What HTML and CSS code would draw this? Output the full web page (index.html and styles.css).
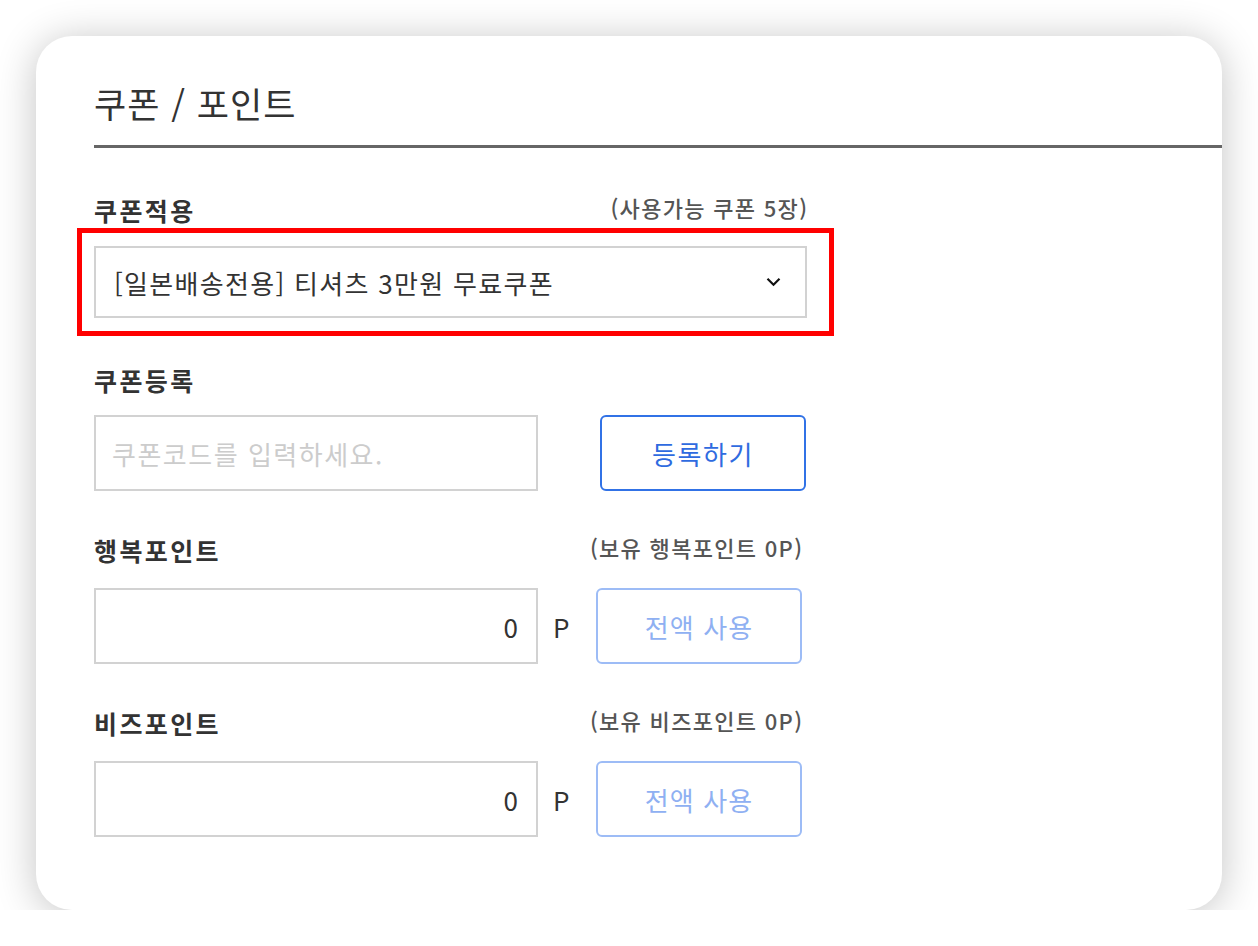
FILE: index.html
```html
<!DOCTYPE html>
<html lang="ko">
<head>
<meta charset="utf-8">
<title>쿠폰 / 포인트</title>
<link rel="stylesheet" href="styles.css">
</head>
<body>
<div class="card">
  <h2 class="title">쿠폰 / 포인트</h2>
  <div class="divider"></div>

  <section class="sec sec-first">
    <div class="label-row wide">
      <span class="label">쿠폰적용</span>
      <span class="note">(사용가능 쿠폰 5장)</span>
    </div>
    <div class="select-wrap">
      <div class="select">
        <span class="select-text">[일본배송전용] 티셔츠 3만원 무료쿠폰</span>
        <svg class="chev" width="15" height="10" viewBox="0 0 15 10"><path d="M1.5 1.8 L7.5 7.8 L13.5 1.8" fill="none" stroke="#111" stroke-width="2.2"/></svg>
      </div>
      <div class="highlight"></div>
    </div>
  </section>

  <section class="sec sec-register">
    <div class="label-row wide">
      <span class="label">쿠폰등록</span>
    </div>
    <div class="field-row gap-register">
      <input class="field" type="text" placeholder="쿠폰코드를 입력하세요.">
      <button class="btn btn-primary">등록하기</button>
    </div>
  </section>

  <section class="sec sec-point">
    <div class="label-row narrow">
      <span class="label">행복포인트</span>
      <span class="note">(보유 행복포인트 0P)</span>
    </div>
    <div class="field-row">
      <input class="field num" type="text" value="0">
      <span class="unit">P</span>
      <button class="btn btn-light">전액 사용</button>
    </div>
  </section>

  <section class="sec sec-point">
    <div class="label-row narrow">
      <span class="label">비즈포인트</span>
      <span class="note">(보유 비즈포인트 0P)</span>
    </div>
    <div class="field-row">
      <input class="field num" type="text" value="0">
      <span class="unit">P</span>
      <button class="btn btn-light">전액 사용</button>
    </div>
  </section>
</div>
</body>
</html>
```

FILE: styles.css
```css
* { box-sizing: border-box; }

html, body {
  margin: 0;
  padding: 0;
  background: #ffffff;
}

body {
  font-family: "Noto Sans CJK KR", "Noto Sans", sans-serif;
  color: #333333;
}

.card {
  margin: 36px 0 0 36px;
  width: 1186px;
  height: 874px;
  background: #ffffff;
  border-radius: 36px;
  box-shadow: 0 4px 40px rgba(0, 0, 0, 0.24);
  padding: 42px 0 0 58px;
}

.title {
  margin: 0;
  font-size: 35px;
  font-weight: 400;
  letter-spacing: 1px;
  line-height: 50px;
  color: #333333;
}

.divider {
  margin-top: 17px;
  height: 3px;
  background: #666666;
}

.sec {
  margin-top: 44px;
}

.sec-first {
  margin-top: 47px;
}

.sec-register {
  margin-top: 47px;
}

.label-row {
  display: flex;
  justify-content: space-between;
  align-items: center;
  height: 30px;
}

.label-row.wide { width: 713px; }
.label-row.narrow { width: 708px; }

.label {
  font-size: 25px;
  font-weight: 700;
  letter-spacing: 2.4px;
  color: #333333;
  line-height: 30px;
}

.note {
  font-size: 22px;
  font-weight: 500;
  letter-spacing: 1.3px;
  margin-right: -1.3px;
  color: #555555;
  line-height: 30px;
  padding-bottom: 6px;
}

.select-wrap {
  position: relative;
  margin-top: 21px;
  width: 713px;
}

.select {
  display: flex;
  align-items: center;
  justify-content: space-between;
  height: 72px;
  border: 2px solid #d2d2d2;
  padding: 0 24px 0 18px;
}

.select-text {
  font-size: 26px;
  letter-spacing: 1.3px;
  color: #333333;
}

.chev {
  display: block;
}

.highlight {
  position: absolute;
  top: -18px;
  left: -17px;
  right: -27px;
  bottom: -18px;
  border: 5px solid #ff0000;
  pointer-events: none;
}

.field-row {
  display: flex;
  align-items: center;
  margin-top: 20px;
}

.sec-point .field-row {
  margin-top: 23px;
}

.field {
  width: 444px;
  height: 76px;
  border: 2px solid #d2d2d2;
  padding: 0 16px;
  font-family: inherit;
  font-size: 26px;
  letter-spacing: 1.5px;
  color: #333333;
  outline: none;
  background: #ffffff;
}

.field::placeholder {
  color: #cccccc;
}

.field.num {
  text-align: right;
  letter-spacing: 0;
  padding-right: 18px;
}

.gap-register .btn {
  margin-left: 62px;
}

.unit {
  width: 58px;
  padding-left: 15px;
  font-size: 26px;
  color: #333333;
}

.btn {
  width: 206px;
  height: 76px;
  border-radius: 6px;
  background: #ffffff;
  font-family: inherit;
  font-size: 26px;
  cursor: pointer;
}

.btn-primary {
  border: 2px solid #3172e6;
  color: #2f6be0;
  letter-spacing: 1.6px;
}

.btn-light {
  border: 2px solid #9dbcf6;
  color: #8fb0f2;
  letter-spacing: 1.1px;
}
```
